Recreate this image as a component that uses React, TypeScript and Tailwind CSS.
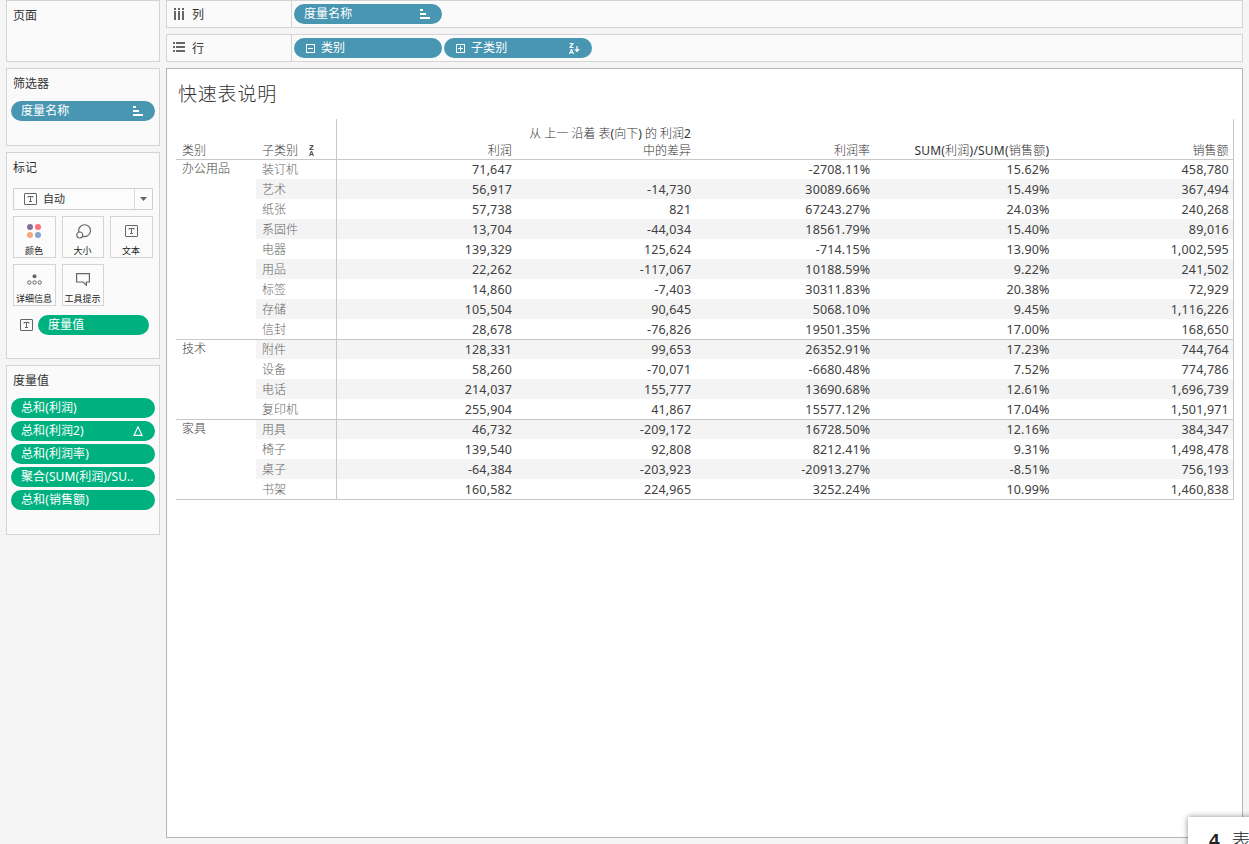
import type { ReactNode } from "react";

type Row = [string, string, string, string, string, string];

const groups: { name: string; rows: Row[] }[] = [
  {
    name: "办公用品",
    rows: [
      ["装订机", "71,647", "", "-2708.11%", "15.62%", "458,780"],
      ["艺术", "56,917", "-14,730", "30089.66%", "15.49%", "367,494"],
      ["纸张", "57,738", "821", "67243.27%", "24.03%", "240,268"],
      ["系固件", "13,704", "-44,034", "18561.79%", "15.40%", "89,016"],
      ["电器", "139,329", "125,624", "-714.15%", "13.90%", "1,002,595"],
      ["用品", "22,262", "-117,067", "10188.59%", "9.22%", "241,502"],
      ["标签", "14,860", "-7,403", "30311.83%", "20.38%", "72,929"],
      ["存储", "105,504", "90,645", "5068.10%", "9.45%", "1,116,226"],
      ["信封", "28,678", "-76,826", "19501.35%", "17.00%", "168,650"],
    ],
  },
  {
    name: "技术",
    rows: [
      ["附件", "128,331", "99,653", "26352.91%", "17.23%", "744,764"],
      ["设备", "58,260", "-70,071", "-6680.48%", "7.52%", "774,786"],
      ["电话", "214,037", "155,777", "13690.68%", "12.61%", "1,696,739"],
      ["复印机", "255,904", "41,867", "15577.12%", "17.04%", "1,501,971"],
    ],
  },
  {
    name: "家具",
    rows: [
      ["用具", "46,732", "-209,172", "16728.50%", "12.16%", "384,347"],
      ["椅子", "139,540", "92,808", "8212.41%", "9.31%", "1,498,478"],
      ["桌子", "-64,384", "-203,923", "-20913.27%", "-8.51%", "756,193"],
      ["书架", "160,582", "224,965", "3252.24%", "10.99%", "1,460,838"],
    ],
  },
];

function Panel({ title, className, children }: { title: string; className: string; children?: ReactNode }) {
  return (
    <section className={`border border-[#d4d4d4] bg-[#fafafa] ${className}`}>
      <h2 className="px-1.5 pt-[6px] text-[12px] leading-[18px] text-[#333]">{title}</h2>
      {children}
    </section>
  );
}

function Pill({ label, className, left, right }: { label: string; className: string; left?: ReactNode; right?: ReactNode }) {
  return (
    <div className={`flex h-5 shrink-0 items-center rounded-full pl-2.5 text-[12px] leading-5 tracking-[0.1px] text-white ${className}`}>
      {left}
      <span className="flex-1 whitespace-nowrap">{label}</span>
      {right}
    </div>
  );
}

function SortBars() {
  return (
    <svg width="10" height="10" viewBox="0 0 10 10" fill="#fff" shapeRendering="crispEdges">
      <path d="M0 0h3v2H0zM0 4h6v2H0zM0 8h10v2H0z" />
    </svg>
  );
}

function ExpandBox({ plus }: { plus?: boolean }) {
  return (
    <svg className="mr-1.5 ml-[2px]" width="9" height="9" viewBox="0 0 9 9" fill="none" stroke="#fff" shapeRendering="crispEdges">
      <rect x=".5" y=".5" width="8" height="8" />
      <path d={plus ? "M2 4.5h5M4.5 2v5" : "M2 4.5h5"} />
    </svg>
  );
}

function SortZA({ arrow, color }: { arrow?: boolean; color: string }) {
  return (
    <svg width="12" height="11" viewBox="0 0 12 11" fill={color}>
      <path d="M.5 0h4v1.2L2 3.9h2.5V5h-4V3.8L3 1.1H.5z" />
      <path fillRule="evenodd" d="M1.9 6h1.2L5 11H3.8l-.3-1h-2l-.3 1H0zM2.5 7.4L1.9 9.1h1.2z" />
      {arrow && <path d="M7.4 3h1.2v3.2H11L8 9.3 5.2 6.2h2.2z" />}
    </svg>
  );
}

function TextIcon() {
  return (
    <svg width="13" height="12" viewBox="0 0 13 12" fill="none" stroke="#666">
      <rect x=".5" y=".5" width="12" height="11" rx=".5" />
      <path d="M4 4.6V3.5h5v1.1M6.5 3.5v5M5 8.5h3" />
    </svg>
  );
}

function MarkButton({ label, icon }: { label: string; icon: ReactNode }) {
  return (
    <div className="flex h-[42px] flex-col items-center border border-[#d4d4d4] bg-[#fbfbfb]">
      <div className="flex h-[28px] items-center justify-center">{icon}</div>
      <span className="-ml-px text-[9px] leading-[12px] whitespace-nowrap text-[#222]">{label}</span>
    </div>
  );
}

function Shelf({ label, icon, children }: { label: string; icon: ReactNode; children: ReactNode }) {
  return (
    <div className="flex h-7 border border-[#d4d4d4] bg-[#fafafa]">
      <div className="flex w-[125px] shrink-0 items-center gap-[7px] border-r border-[#d4d4d4] pl-1.5 text-[12px] text-[#333]">
        {icon}
        <span className="pt-0.5">{label}</span>
      </div>
      <div className="flex items-center gap-0.5 pl-0.5">{children}</div>
    </div>
  );
}

const measures = ["总和(利润)", "总和(利润2)", "总和(利润率)", "聚合(SUM(利润)/SU..", "总和(销售额)"];
const blue = "bg-[#4996b2]";
const green = "bg-[#00b180]";

function Sidebar() {
  return (
    <aside className="flex w-[154px] shrink-0 flex-col gap-1.5">
      <Panel title="页面" className="h-[62px]" />
      <Panel title="筛选器" className="h-[78px]">
        <div className="mx-1 mt-[8px]">
          <Pill label="度量名称" className={`${blue} pr-3`} right={<SortBars />} />
        </div>
      </Panel>
      <Panel title="标记" className="h-[207px]">
        <div className="mx-1.5 mt-[11px] flex h-[22px] items-center rounded-[1px] border border-[#cfcfcf] bg-[#fcfcfc] pl-2.5 text-[11px] text-[#333]">
          <TextIcon />
          <span className="ml-1.5 flex-1">自动</span>
          <div className="flex h-full w-[18px] items-center justify-center border-l border-[#d8d8d8]">
            <svg width="7" height="4" viewBox="0 0 7 4" fill="#666"><path d="M0 0h7L3.5 4z" /></svg>
          </div>
        </div>
        <div className="mx-1.5 mt-1.5 grid grid-cols-[43px_42px_43px] gap-x-1.5 gap-y-1.5">
          <MarkButton
            label="颜色"
            icon={
              <svg className="-ml-px" width="14" height="14" viewBox="0 0 14 14">
                <circle cx="3" cy="3" r="3" fill="#83709a" />
                <circle cx="11" cy="3" r="3" fill="#fb6e80" />
                <circle cx="3" cy="11" r="3" fill="#f6a77c" />
                <circle cx="11" cy="11" r="3" fill="#84a5cf" />
              </svg>
            }
          />
          <MarkButton
            label="大小"
            icon={
              <svg width="15" height="15" viewBox="0 0 15 15" fill="none" stroke="#666" strokeWidth="1.2">
                <path d="M2.9 8.2A5.9 5.9 0 1 1 6.6 12.2" />
                <circle cx="3.8" cy="11" r="3" />
              </svg>
            }
          />
          <MarkButton label="文本" icon={<TextIcon />} />
          <MarkButton
            label="详细信息"
            icon={
              <svg className="-ml-px" width="15" height="11" viewBox="0 0 15 11" fill="none" stroke="#666">
                <circle cx="7.5" cy="2.2" r="2" fill="#666" stroke="none" />
                <circle cx="2.3" cy="8.5" r="1.7" />
                <circle cx="7.5" cy="8.5" r="1.7" />
                <circle cx="12.7" cy="8.5" r="1.7" />
              </svg>
            }
          />
          <MarkButton
            label="工具提示"
            icon={
              <svg width="14" height="13" viewBox="0 0 14 13" fill="none" stroke="#666" strokeWidth="1.2">
                <path d="M.6 .6h12.8v8.4h-3v3.2L7 9H.6z" />
              </svg>
            }
          />
        </div>
        <div className="mt-[9px] mr-2.5 ml-[13px] flex items-center gap-[5px]">
          <TextIcon />
          <div className="flex-1">
            <Pill label="度量值" className={green} />
          </div>
        </div>
      </Panel>
      <Panel title="度量值" className="h-[170px]">
        <div className="mx-1 mt-[8px] flex flex-col gap-[3px]">
          {measures.map((m, i) => (
            <Pill
              key={m}
              label={m}
              className={`${green} pr-3`}
              right={
                i === 1 && (
                  <svg width="10" height="10" viewBox="0 0 10 10" fill="none" stroke="#fff" strokeWidth="1.1">
                    <path d="M5 .8l4 8.6H1z" />
                  </svg>
                )
              }
            />
          ))}
        </div>
      </Panel>
    </aside>
  );
}

function DataTable() {
  const head = "flex items-end justify-end pr-[4.5px] text-right text-[#333]";
  return (
    <div className="w-[1058px] text-[12px] leading-4 text-[#404040]">
      <div className="grid h-10 grid-cols-[80px_80px_897px_1px]">
        <div className="flex items-end pl-1.5 font-light text-[#444]">类别</div>
        <div className="flex items-end pl-1.5 font-light text-[#444]">
          子类别
          <span className="mb-[3px] ml-[11px]"><SortZA color="#555" /></span>
        </div>
        <div className="grid grid-cols-5 border-l border-[#c8c8c8] font-light">
          <div className={head}>利润</div>
          <div className={head}>
            <span className="-ml-2 whitespace-nowrap">
              <span className="mb-px block">从 上一 沿着 表<b className="font-normal">(</b>向下<b className="font-normal">)</b> 的 利润<b className="font-normal">2</b></span>
              中的差异
            </span>
          </div>
          <div className={head}>利润率</div>
          <div className={head}>
            <span className="font-normal tracking-[0.22px]">SUM(<i className="font-light not-italic">利润</i>)/SUM(<i className="font-light not-italic">销售额</i>)</span>
          </div>
          <div className={head}>销售额</div>
        </div>
        <div className="bg-[#c8c8c8]" />
      </div>
      {groups.map((g, gi) => (
        <div key={g.name} className="flex border-r border-[#c8c8c8]">
          <div className="w-20 border-t border-[#c8c8c8] pl-1.5 pt-px font-light text-[#444]">{g.name}</div>
          <div className="flex-1">
            {g.rows.map((r, i) => {
              const shaded = gi === 0 ? i % 2 === 1 : i % 2 === 0;
              return (
                <div
                  key={r[0]}
                  className={`grid h-5 grid-cols-[80px_897px] ${i === 0 ? "border-t border-[#c8c8c8]" : ""} ${shaded ? "bg-[#f4f4f4]" : ""}`}
                >
                  <div className={`pl-1.5 font-light text-[#666] ${i === 0 ? "pt-0.5" : "pt-[3px]"}`}>{r[0]}</div>
                  <div className={`grid grid-cols-5 border-l border-[#c8c8c8] text-right text-[12.5px] tracking-[0.14px] ${i === 0 ? "pt-0.5" : "pt-[3px]"}`}>
                    {r.slice(1).map((v, c) => (
                      <span key={c} className="pr-[4.2px]">{v}</span>
                    ))}
                  </div>
                </div>
              );
            })}
          </div>
        </div>
      ))}
      <div className="h-px bg-[#c8c8c8]" />
    </div>
  );
}

export default function App() {
  return (
    <div className="relative flex h-[844px] w-[1249px] gap-1.5 overflow-hidden bg-[#f5f5f5] pl-1.5 font-['Noto_Sans','Noto_Sans_CJK_SC',sans-serif]">
      <Sidebar />
      <main className="flex w-[1077px] flex-col gap-1.5">
        <Shelf
          label="列"
          icon={
            <svg width="12" height="12" viewBox="0 0 12 12" fill="#666" shapeRendering="crispEdges">
              <path d="M1 0h2v2H1zM5 0h2v2H5zM9 0h2v2H9zM1 3h2v9H1zM5 3h2v9H5zM9 3h2v9H9z" />
            </svg>
          }
        >
          <Pill label="度量名称" className={`${blue} w-[148px] pr-3`} right={<SortBars />} />
        </Shelf>
        <Shelf
          label="行"
          icon={
            <svg width="12" height="12" viewBox="0 0 12 12" fill="#666" shapeRendering="crispEdges">
              <path d="M0 0h2v2H0zM0 4h2v2H0zM0 8h2v2H0zM3 0h9v2H3zM3 4h9v2H3zM3 8h9v2H3z" />
            </svg>
          }
        >
          <Pill label="类别" className={`${blue} w-[148px]`} left={<ExpandBox />} />
          <Pill label="子类别" className={`${blue} w-[148px] pr-[11px]`} left={<ExpandBox plus />} right={<SortZA arrow color="#fff" />} />
        </Shelf>
        <section className="h-[770px] border border-[#b4b4b4] bg-white pl-[9px]">
          <h1 className="h-[50px] pt-[11px] pl-[2px] text-[19px] leading-7 font-light tracking-[0.8px] text-[#333]">快速表说明</h1>
          <DataTable />
        </section>
      </main>
      <div className="absolute top-[817px] left-[1188px] flex h-20 w-40 gap-3 bg-white pt-[10px] pl-[21px] text-[19px] leading-7 text-[#222] shadow-[0_0_6px_rgba(0,0,0,0.45)]">
        <b className="font-['Liberation_Sans',sans-serif] font-semibold">4</b>
        <span className="font-light">表</span>
      </div>
    </div>
  );
}
